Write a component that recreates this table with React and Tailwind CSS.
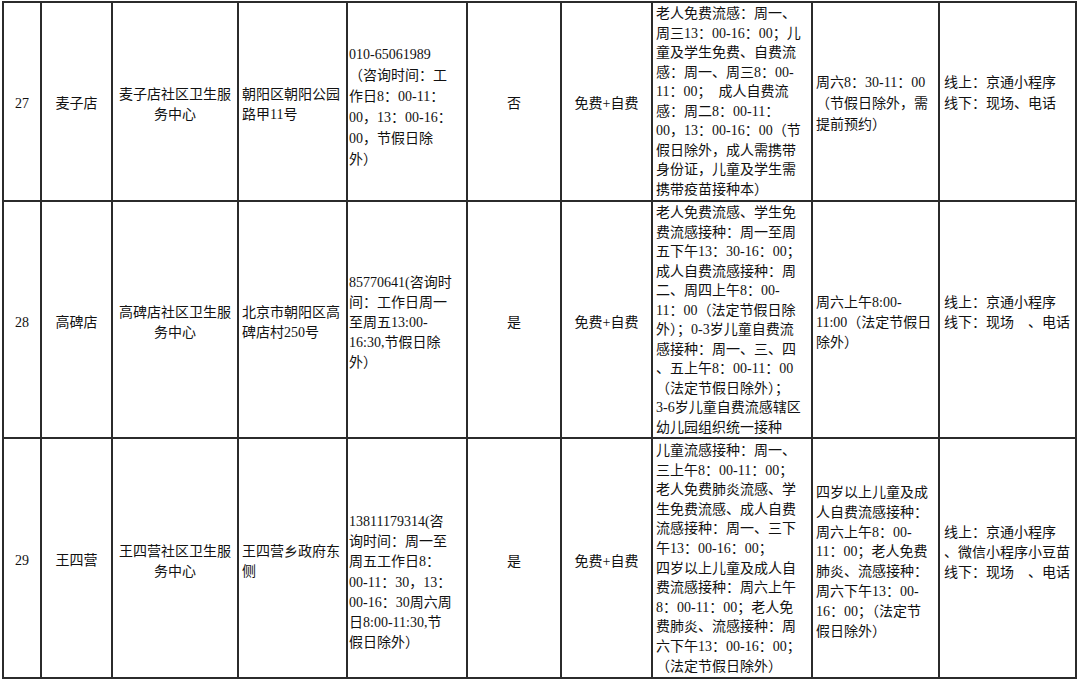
import React from "react";

const rows = [
  [
    { l: ["27"], c: "text-center pt-[91px] leading-[20px]" },
    { l: ["麦子店"], c: "text-center pt-[91px] leading-[20px]" },
    { l: ["麦子店社区卫生服", "务中心"], c: "text-center pt-[82px] leading-[20px]" },
    { l: ["朝阳区朝阳公园", "路甲11号"], c: "pl-[3px] pt-[82px] leading-[20px]" },
    {
      l: ["010-65061989", "（咨询时间：工", "作日8：00-11：", "00，13：00-16：", "00，节假日除", "外）"],
      c: "pl-[1px] pt-[41px] leading-[21px]",
    },
    { l: ["否"], c: "text-center pt-[91px] leading-[20px]" },
    { l: ["免费+自费"], c: "text-center pt-[91px] leading-[20px]" },
    {
      l: [
        "老人免费流感：周一、",
        "周三13：00-16：00；儿",
        "童及学生免费、自费流",
        "感：周一、周三8：00-",
        "11：00；　成人自费流",
        "感：周二8：00-11：",
        "00，13：00-16：00（节",
        "假日除外，成人需携带",
        "身份证，儿童及学生需",
        "携带疫苗接种本）",
      ],
      c: "pl-[3px] pt-[1px] leading-[19.5px]",
    },
    { l: ["周六8：30-11：00", "（节假日除外，需", "提前预约）"], c: "pl-[3px] pt-[69px] leading-[21px]" },
    { l: ["线上：京通小程序", "线下：现场、电话"], c: "pl-[4px] pt-[69px] leading-[21px]" },
  ],
  [
    { l: ["28"], c: "text-center pt-[111px] leading-[20px]" },
    { l: ["高碑店"], c: "text-center pt-[111px] leading-[20px]" },
    { l: ["高碑店社区卫生服", "务中心"], c: "text-center pt-[101px] leading-[20px]" },
    { l: ["北京市朝阳区高", "碑店村250号"], c: "pl-[3px] pt-[101px] leading-[20px]" },
    {
      l: ["85770641(咨询时", "间：工作日周一", "至周五13:00-", "16:30,节假日除", "外）"],
      c: "pl-[1px] pt-[71px] leading-[20px]",
    },
    { l: ["是"], c: "text-center pt-[111px] leading-[20px]" },
    { l: ["免费+自费"], c: "text-center pt-[111px] leading-[20px]" },
    {
      l: [
        "老人免费流感、学生免",
        "费流感接种：周一至周",
        "五下午13：30-16：00；",
        "成人自费流感接种：周",
        "二、周四上午8：00-",
        "11：00（法定节假日除",
        "外）；0-3岁儿童自费流",
        "感接种：周一、三、四",
        "、五上午8：00-11：00",
        "（法定节假日除外）；",
        "3-6岁儿童自费流感辖区",
        "幼儿园组织统一接种",
      ],
      c: "pl-[3px] pt-[1px] leading-[19.5px]",
    },
    { l: ["周六上午8:00-", "11:00（法定节假日", "除外）"], c: "pl-[3px] pt-[91px] leading-[20px]" },
    { l: ["线上：京通小程序", "线下：现场　、电话"], c: "pl-[4px] pt-[91px] leading-[20px]" },
  ],
  [
    { l: ["29"], c: "text-center pt-[112px] leading-[20px]" },
    { l: ["王四营"], c: "text-center pt-[112px] leading-[20px]" },
    { l: ["王四营社区卫生服", "务中心"], c: "text-center pt-[103px] leading-[20px]" },
    { l: ["王四营乡政府东", "侧"], c: "pl-[3px] pt-[103px] leading-[20px]" },
    {
      l: [
        "13811179314(咨",
        "询时间：周一至",
        "周五工作日8：",
        "00-11：30，13：",
        "00-16：30周六周",
        "日8:00-11:30,节",
        "假日除外）",
      ],
      c: "pl-[1px] pt-[73px] leading-[20.2px]",
    },
    { l: ["是"], c: "text-center pt-[113px] leading-[20px]" },
    { l: ["免费+自费"], c: "text-center pt-[113px] leading-[20px]" },
    {
      l: [
        "儿童流感接种：周一、",
        "三上午8：00-11：00；",
        "老人免费肺炎流感、学",
        "生免费流感、成人自费",
        "流感接种：周一、三下",
        "午13：00-16：00；",
        "四岁以上儿童及成人自",
        "费流感接种：周六上午",
        "8：00-11：00；老人免",
        "费肺炎、流感接种：周",
        "六下午13：00-16：00；",
        "（法定节假日除外）",
      ],
      c: "pl-[3px] pt-[2px] leading-[19.6px]",
    },
    {
      l: [
        "四岁以上儿童及成",
        "人自费流感接种：",
        "周六上午8：00-",
        "11：00；老人免费",
        "肺炎、流感接种：",
        "周六下午13：00-",
        "16：00；（法定节",
        "假日除外）",
      ],
      c: "pl-[3px] pt-[44px] leading-[19.8px]",
    },
    {
      l: ["线上：京通小程序", "、微信小程序小豆苗", "线下：现场　、电话"],
      c: "pl-[4px] pt-[84px] leading-[20px]",
    },
  ],
];

export default function App() {
  return (
    <div className="w-[1080px] h-[682px] bg-white overflow-hidden pt-[1px] pl-[2px]">
      <div className="w-[1075px] grid grid-cols-[36px_69px_124px_107px_118px_92px_89px_158px_125px_135px] grid-rows-[197px_235px_238px] gap-[2px] bg-[#2b2b2b] border-2 border-[#2b2b2b] font-['Liberation_Serif','Noto_Sans_CJK_SC',serif] text-[14px] text-[#111]">
        {rows.map((row, ri) =>
          row.map((cell, ci) => (
            <div key={ri + "-" + ci} className={"bg-white overflow-hidden " + cell.c}>
              {cell.l.map((line, li) => (
                <div key={li} className="whitespace-pre">
                  {line}
                </div>
              ))}
            </div>
          ))
        )}
      </div>
    </div>
  );
}
